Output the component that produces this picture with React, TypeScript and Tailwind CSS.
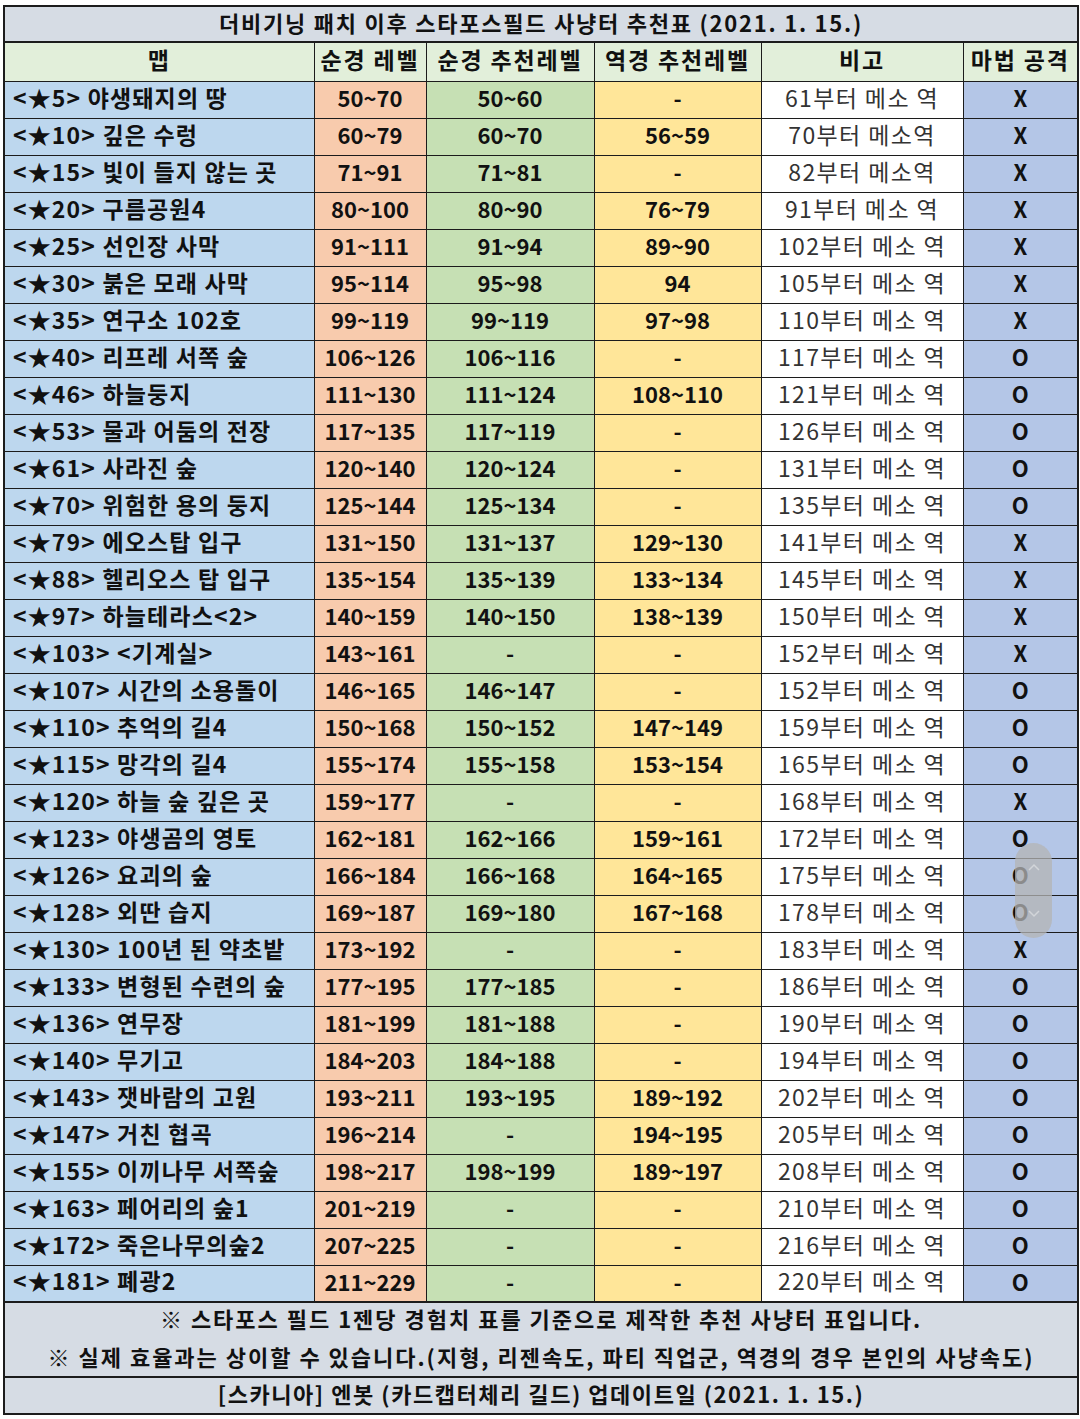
const FONT = { fontFamily: '"Noto Sans CJK KR", "Noto Sans", sans-serif' };

type Row = [string, string, string, string, string, "X" | "O"];

const ROWS: Row[] = [
  ["<★5> 야생돼지의 땅", "50~70", "50~60", "-", "61부터 메소 역", "X"],
  ["<★10> 깊은 수렁", "60~79", "60~70", "56~59", "70부터 메소역", "X"],
  ["<★15> 빛이 들지 않는 곳", "71~91", "71~81", "-", "82부터 메소역", "X"],
  ["<★20> 구름공원4", "80~100", "80~90", "76~79", "91부터 메소 역", "X"],
  ["<★25> 선인장 사막", "91~111", "91~94", "89~90", "102부터 메소 역", "X"],
  ["<★30> 붉은 모래 사막", "95~114", "95~98", "94", "105부터 메소 역", "X"],
  ["<★35> 연구소 102호", "99~119", "99~119", "97~98", "110부터 메소 역", "X"],
  ["<★40> 리프레 서쪽 숲", "106~126", "106~116", "-", "117부터 메소 역", "O"],
  ["<★46> 하늘둥지", "111~130", "111~124", "108~110", "121부터 메소 역", "O"],
  ["<★53> 물과 어둠의 전장", "117~135", "117~119", "-", "126부터 메소 역", "O"],
  ["<★61> 사라진 숲", "120~140", "120~124", "-", "131부터 메소 역", "O"],
  ["<★70> 위험한 용의 둥지", "125~144", "125~134", "-", "135부터 메소 역", "O"],
  ["<★79> 에오스탑 입구", "131~150", "131~137", "129~130", "141부터 메소 역", "X"],
  ["<★88> 헬리오스 탑 입구", "135~154", "135~139", "133~134", "145부터 메소 역", "X"],
  ["<★97> 하늘테라스<2>", "140~159", "140~150", "138~139", "150부터 메소 역", "X"],
  ["<★103> <기계실>", "143~161", "-", "-", "152부터 메소 역", "X"],
  ["<★107> 시간의 소용돌이", "146~165", "146~147", "-", "152부터 메소 역", "O"],
  ["<★110> 추억의 길4", "150~168", "150~152", "147~149", "159부터 메소 역", "O"],
  ["<★115> 망각의 길4", "155~174", "155~158", "153~154", "165부터 메소 역", "O"],
  ["<★120> 하늘 숲 깊은 곳", "159~177", "-", "-", "168부터 메소 역", "X"],
  ["<★123> 야생곰의 영토", "162~181", "162~166", "159~161", "172부터 메소 역", "O"],
  ["<★126> 요괴의 숲", "166~184", "166~168", "164~165", "175부터 메소 역", "O"],
  ["<★128> 외딴 습지", "169~187", "169~180", "167~168", "178부터 메소 역", "O"],
  ["<★130> 100년 된 약초밭", "173~192", "-", "-", "183부터 메소 역", "X"],
  ["<★133> 변형된 수련의 숲", "177~195", "177~185", "-", "186부터 메소 역", "O"],
  ["<★136> 연무장", "181~199", "181~188", "-", "190부터 메소 역", "O"],
  ["<★140> 무기고", "184~203", "184~188", "-", "194부터 메소 역", "O"],
  ["<★143> 잿바람의 고원", "193~211", "193~195", "189~192", "202부터 메소 역", "O"],
  ["<★147> 거친 협곡", "196~214", "-", "194~195", "205부터 메소 역", "O"],
  ["<★155> 이끼나무 서쪽숲", "198~217", "198~199", "189~197", "208부터 메소 역", "O"],
  ["<★163> 페어리의 숲1", "201~219", "-", "-", "210부터 메소 역", "O"],
  ["<★172> 죽은나무의숲2", "207~225", "-", "-", "216부터 메소 역", "O"],
  ["<★181> 폐광2", "211~229", "-", "-", "220부터 메소 역", "O"],
];

const HEADERS = ["맵", "순경 레벨", "순경 추천레벨", "역경 추천레벨", "비고", "마법 공격"];

// dark grid line shared by every cell; pb nudges the CJK glyphs up a bit
const cell = "border-[1.5px] border-[#1c1c1c] p-0 pb-[5px] align-middle leading-none";

export default function App() {
  return (
    <div className="relative min-h-[1419px] bg-white pt-[5px] pl-[3px] text-[#111]" style={FONT}>
      <table className="w-[1074px] table-fixed border-collapse border-2 border-[#1c1c1c]">
        <colgroup>
          <col className="w-[310px]" />
          <col className="w-[112px]" />
          <col className="w-[168px]" />
          <col className="w-[167px]" />
          <col className="w-[202px]" />
          <col className="w-[115px]" />
        </colgroup>
        <thead>
          <tr className="h-[36px] bg-[#d6dce4]">
            <th colSpan={6} className={`${cell} border-b-2 text-center text-[22px] font-bold tracking-[0.08em]`}>
              더비기닝 패치 이후 스타포스필드 사냥터 추천표 (2021. 1. 15.)
            </th>
          </tr>
          <tr className="h-[39px] bg-[#e2efda]">
            {HEADERS.map((h) => (
              <th key={h} className={`${cell} text-center text-[23px] font-bold tracking-[0.08em]`}>
                {h}
              </th>
            ))}
          </tr>
        </thead>
        <tbody>
          {ROWS.map((r) => (
            <tr key={r[0]} className="h-[37px] text-[22px] font-bold">
              <td className={`${cell} bg-[#bdd7ee] pl-[8px] text-left text-[23px] tracking-[0.05em] whitespace-nowrap`}>{r[0]}</td>
              <td className={`${cell} bg-[#f8cbad] text-center`}>{r[1]}</td>
              <td className={`${cell} bg-[#c6e0b4] text-center`}>{r[2]}</td>
              <td className={`${cell} bg-[#ffe699] text-center`}>{r[3]}</td>
              <td className={`${cell} bg-white text-center text-[23px] font-normal tracking-[0.06em] text-[#333]`}>{r[4]}</td>
              <td className={`${cell} bg-[#b4c6e7] text-center`}>{r[5]}</td>
            </tr>
          ))}
        </tbody>
        <tfoot className="bg-[#d6dce4] text-[22px] font-bold tracking-[0.09em]">
          <tr className="h-[75px]">
            <td colSpan={6} className={`${cell} border-t-2 text-center`}>
              <div className="flex flex-col gap-[16px]">
                <span>※ 스타포스 필드 1젠당 경험치 표를 기준으로 제작한 추천 사냥터 표입니다.</span>
                <span>※ 실제 효율과는 상이할 수 있습니다.(지형, 리젠속도, 파티 직업군, 역경의 경우 본인의 사냥속도)</span>
              </div>
            </td>
          </tr>
          <tr className="h-[37px]">
            <td colSpan={6} className={`${cell} border-t-2 text-center tracking-[0.07em]`}>
              [스카니아] 엔봇 (카드캡터체리 길드) 업데이트일 (2021. 1. 15.)
            </td>
          </tr>
        </tfoot>
      </table>
      {/* scroll thumb that floats over the last column */}
      <div className="absolute top-[843px] left-[1015px] flex h-[95px] w-[37px] flex-col items-center justify-around rounded-full bg-[#b4b4b4]/75">
        <svg width="12" height="8" viewBox="0 0 12 8" className="opacity-40">
          <path d="M1 7 L6 2 L11 7" fill="none" stroke="#fff" strokeWidth="1.5" />
        </svg>
        <svg width="12" height="8" viewBox="0 0 12 8" className="opacity-40">
          <path d="M1 1 L6 6 L11 1" fill="none" stroke="#fff" strokeWidth="1.5" />
        </svg>
      </div>
    </div>
  );
}
